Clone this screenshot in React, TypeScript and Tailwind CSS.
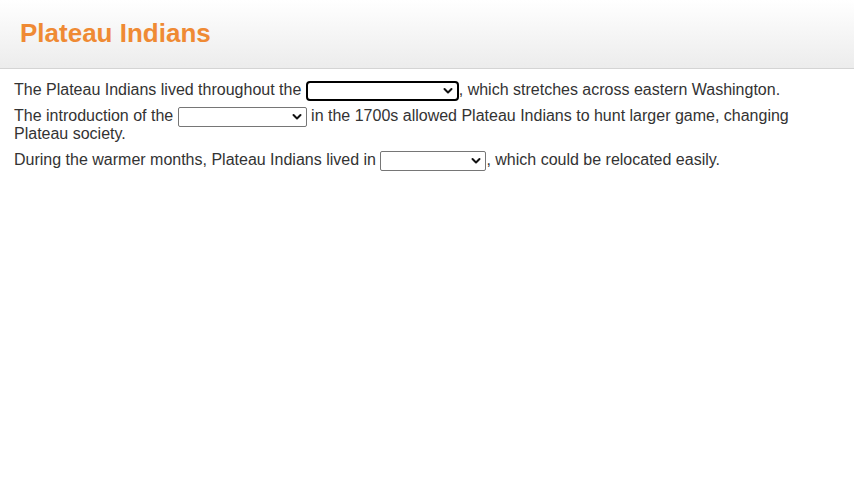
import React from 'react';

function Dropdown({ width, focused }: { width: number; focused?: boolean }) {
  return (
    <span
      className={
        focused
          ? 'relative -my-[2px] inline-block h-[20px] align-middle rounded-[4px] border-2 border-black bg-white'
          : 'relative -my-[2px] inline-block h-[20px] align-middle rounded-[2px] border border-[#767676] bg-white'
      }
      style={{ width }}
    >
      <svg
        className="absolute right-[4px] top-1/2 -translate-y-1/2"
        width="10"
        height="7"
        viewBox="0 0 10 7"
        fill="none"
      >
        <path d="M1.5 1.5 L5 5 L8.5 1.5" stroke="#111" strokeWidth="2" strokeLinecap="round" strokeLinejoin="round" />
      </svg>
    </span>
  );
}

export default function App() {
  return (
    <div className="min-h-screen bg-white" style={{ fontFamily: '"Liberation Sans", Arial, sans-serif' }}>
      <div className="h-[69px] border-b border-[#d4d4d4] bg-gradient-to-b from-white to-[#ececec] px-[20px] pt-[16px]">
        <h1 className="text-[26px] font-bold leading-[34px] text-[#ef8a34]">Plateau Indians</h1>
      </div>

      <div className="px-[14px] pt-[12px] text-[16px] leading-[18px] text-[#333]">
        <p className="mb-[8px]">
          The Plateau Indians lived throughout the <Dropdown width={153} focused />, which stretches across eastern Washington.
        </p>
        <p className="mb-[8px]">
          The introduction of the <Dropdown width={129} /> in the 1700s allowed Plateau Indians to hunt larger game, changing Plateau society.
        </p>
        <p className="mb-[8px]">
          During the warmer months, Plateau Indians lived in <Dropdown width={106} />, which could be relocated easily.
        </p>
      </div>
    </div>
  );
}
